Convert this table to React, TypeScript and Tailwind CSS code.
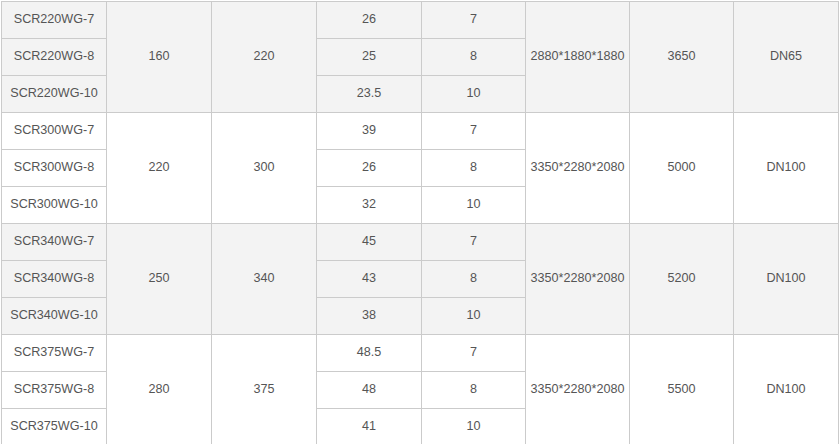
import React from 'react';

type Group = {
  prefix: string;
  a: string;
  b: string;
  vals: string[];
  size: string;
  weight: string;
  dn: string;
  bg: string;
};

const groups: Group[] = [
  { prefix: 'SCR220WG', a: '160', b: '220', vals: ['26', '25', '23.5'], size: '2880*1880*1880', weight: '3650', dn: 'DN65', bg: 'bg-[#f3f3f3]' },
  { prefix: 'SCR300WG', a: '220', b: '300', vals: ['39', '26', '32'], size: '3350*2280*2080', weight: '5000', dn: 'DN100', bg: 'bg-white' },
  { prefix: 'SCR340WG', a: '250', b: '340', vals: ['45', '43', '38'], size: '3350*2280*2080', weight: '5200', dn: 'DN100', bg: 'bg-[#f3f3f3]' },
  { prefix: 'SCR375WG', a: '280', b: '375', vals: ['48.5', '48', '41'], size: '3350*2280*2080', weight: '5500', dn: 'DN100', bg: 'bg-white' },
];

const pressures = ['7', '8', '10'];
const cell = 'border border-[#cbcbcb] h-[37px] p-0 pb-[2px] text-center align-middle';

export default function App() {
  return (
    <div className="w-[840px] h-[444px] overflow-hidden bg-white pt-[1px] pl-[1px]">
      <table
        className="table-fixed border-collapse w-[837px] text-[12.6px] text-[#555555]"
        style={{ fontFamily: '"Liberation Sans", Arial, sans-serif' }}
      >
        <colgroup>
          <col className="w-[105px]" />
          <col className="w-[105px]" />
          <col className="w-[105px]" />
          <col className="w-[105px]" />
          <col className="w-[104px]" />
          <col className="w-[104px]" />
          <col className="w-[104px]" />
          <col className="w-[105px]" />
        </colgroup>
        <tbody>
          {groups.map((g) =>
            pressures.map((p, i) => (
              <tr key={g.prefix + p} className={g.bg}>
                <td className={cell}>{`${g.prefix}-${p}`}</td>
                {i === 0 && (
                  <>
                    <td className={cell} rowSpan={3}>{g.a}</td>
                    <td className={cell} rowSpan={3}>{g.b}</td>
                  </>
                )}
                <td className={cell}>{g.vals[i]}</td>
                <td className={cell}>{p}</td>
                {i === 0 && (
                  <>
                    <td className={cell} rowSpan={3}>{g.size}</td>
                    <td className={cell} rowSpan={3}>{g.weight}</td>
                    <td className={cell} rowSpan={3}>{g.dn}</td>
                  </>
                )}
              </tr>
            ))
          )}
        </tbody>
      </table>
    </div>
  );
}
